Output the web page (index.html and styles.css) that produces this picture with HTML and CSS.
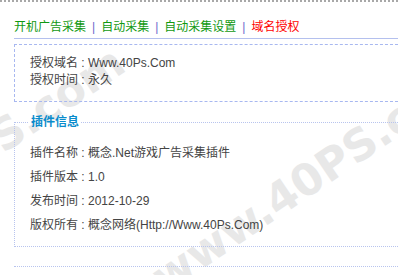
FILE: index.html
```html
<!DOCTYPE html>
<html lang="zh-CN">
<head>
    <meta charset="UTF-8">
    <title>域名授权</title>
    <link rel="stylesheet" href="styles.css">
</head>
<body>
    <div class="topline"></div>

    <div class="nav">
        <a href="#" class="nav-link">开机广告采集</a><span class="sep">|</span><a href="#" class="nav-link">自动采集</a><span class="sep">|</span><a href="#" class="nav-link">自动采集设置</a><span class="sep">|</span><a href="#" class="nav-link current">域名授权</a>
    </div>

    <div class="auth-box">
        <p>授权域名 : Www.40Ps.Com</p>
        <p>授权时间 : 永久</p>
    </div>

    <fieldset class="plugin">
        <legend>插件信息</legend>
        <ul class="plugin-list">
            <li>插件名称 : 概念.Net游戏广告采集插件</li>
            <li>插件版本 : 1.0</li>
            <li>发布时间 : 2012-10-29</li>
            <li>版权所有 : 概念网络(Http://Www.40Ps.Com)</li>
        </ul>
    </fieldset>

    <div class="endline"></div>

    <!-- watermark over the page -->
    <div class="mark mark-main">www.40PS.com</div>
    <div class="mark mark-left">www.40PS.com</div>
</body>
</html>
```

FILE: styles.css
```css
html, body {
    overflow: hidden;
}
body {
    margin: 0;
    padding: 0;
    font-family: "Liberation Sans", "Noto Sans CJK SC", sans-serif;
    font-size: 12px;
    color: #444444;
    background: #ffffff;
    position: relative;
    height: 275px;
}
.topline {
    height: 0;
    border-top: 2px dotted #a8a8a8;
}
.nav {
    margin-left: 14px;
    padding-top: 17px;
    height: 19px;
    line-height: 16px;
    border-bottom: 1px solid #b4c0ee;
}
.nav-link {
    color: #119911;
    text-decoration: none;
}
.nav-link.current {
    color: #ff0000;
}
.sep {
    color: #6a6acc;
    margin: 0 6px;
}
.auth-box {
    margin: 5px 0 0 14px;
    padding: 10px 15px 12px;
    border: 1px dashed #a8b8f0;
    border-right: none;
}
.auth-box p {
    margin: 0;
    line-height: 17px;
}
.plugin {
    margin: 12px 0 0 14px;
    padding: 0 0 9px 14px;
    border: 1px dotted #b8c4ee;
    border-right: none;
}
.plugin legend {
    padding: 0 2px;
    font-weight: bold;
    color: #0a8ccc;
    line-height: 16px;
}
.plugin-list {
    list-style: none;
    margin: 0;
    padding: 11px 0 0 1px;
}
.plugin-list li {
    line-height: 24px;
}
.endline {
    margin: 19px 0 0 14px;
    border-top: 1px dotted #b8c4ee;
}
.mark {
    position: absolute;
    font-family: "DejaVu Sans", sans-serif;
    font-weight: bold;
    font-size: 44px;
    line-height: 44px;
    color: #e8e8e8;
    white-space: nowrap;
    transform-origin: left bottom;
    transform: rotate(-34deg);
    z-index: -1;
}
.mark-main {
    left: 169px;
    top: 256px;
}
.mark-left {
    left: -183px;
    top: 244px;
}
```
